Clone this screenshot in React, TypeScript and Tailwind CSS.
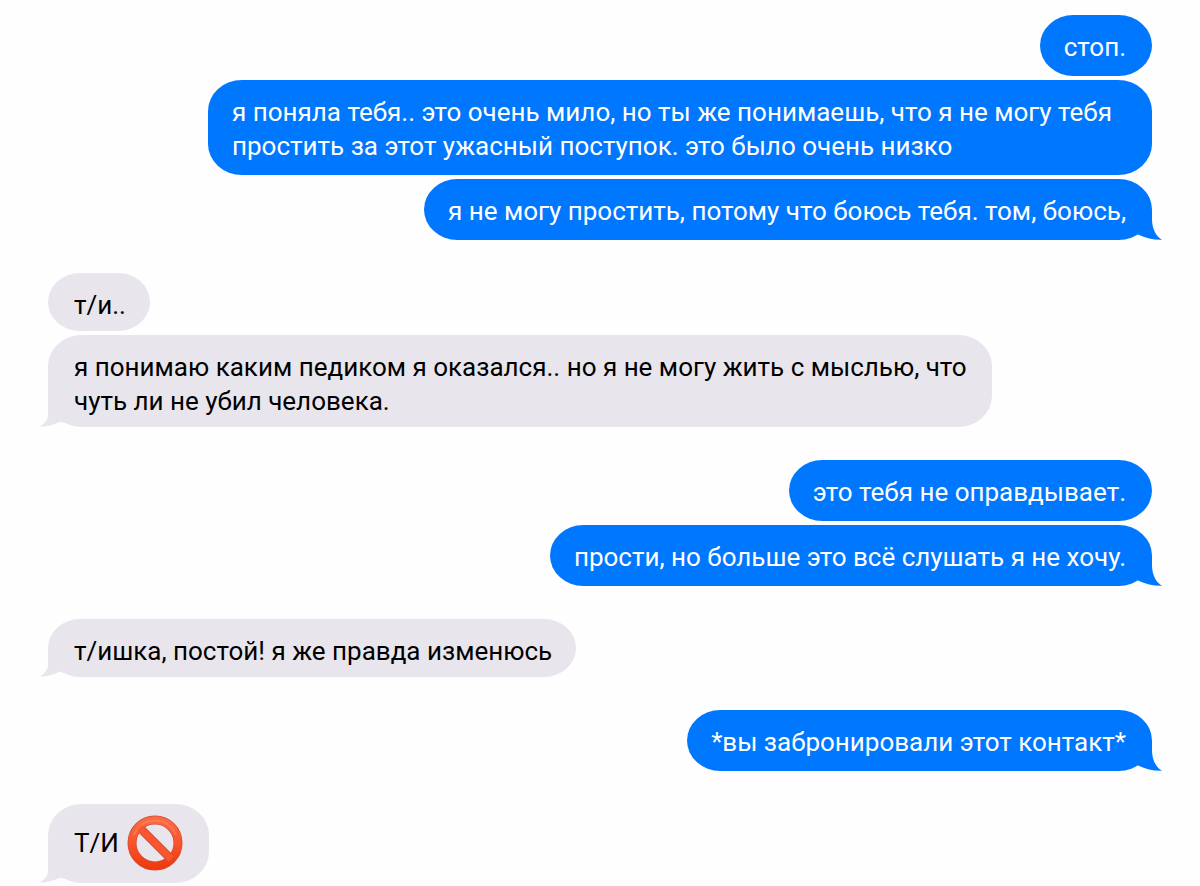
import clsx from "clsx";

type Message = {
  text: string;
  blocked?: boolean;
};

type Group = {
  from: "me" | "them";
  messages: Message[];
};

const groups: Group[] = [
  {
    from: "me",
    messages: [
      { text: "стоп." },
      {
        text: "я поняла тебя.. это очень мило, но ты же понимаешь, что я не могу тебя простить за этот ужасный поступок. это было очень низко",
      },
      { text: "я не могу простить, потому что боюсь тебя. том, боюсь," },
    ],
  },
  {
    from: "them",
    messages: [
      { text: "т/и.." },
      {
        text: "я понимаю каким педиком я оказался.. но я не могу жить с мыслью, что чуть ли не убил человека.",
      },
    ],
  },
  {
    from: "me",
    messages: [
      { text: "это тебя не оправдывает." },
      { text: "прости, но больше это всё слушать я не хочу." },
    ],
  },
  { from: "them", messages: [{ text: "т/ишка, постой! я же правда изменюсь" }] },
  { from: "me", messages: [{ text: "*вы забронировали этот контакт*" }] },
  { from: "them", messages: [{ text: "Т/И", blocked: true }] },
];

function Tail({ mine }: { mine: boolean }) {
  return (
    <svg
      viewBox="0 0 24 30"
      aria-hidden="true"
      className={clsx(
        "absolute bottom-0 h-[30px] w-6",
        mine ? "-right-[10px] fill-[#0077ff]" : "-left-2 -scale-x-100 fill-[#e8e5ec]"
      )}
    >
      {mine ? (
        <path d="M0 0H14V10C14.3 19 18 26.500 24 29.800C15 30 8 28 0 24.500Z" />
      ) : (
        <path d="M0 0H16V18C16 22 18.500 25.500 24 29.700C16 29.500 10 27.500 3.500 24.500L0 26Z" />
      )}
    </svg>
  );
}

function NoEntry() {
  return (
    <svg viewBox="0 0 56 56" role="img" aria-label="🚫" className="size-14 shrink-0">
      <defs>
        <linearGradient id="ring" x1="0" y1="0" x2="0" y2="1">
          <stop offset="0" stopColor="#fb6a45" />
          <stop offset="0.5" stopColor="#f9532b" />
          <stop offset="1" stopColor="#ee3c10" />
        </linearGradient>
      </defs>
      <g fill="none">
        <circle cx="28" cy="28" r="23" stroke="#cf4a2c" strokeWidth="9" />
        <path d="M13 13L43 43" stroke="#c2482c" strokeWidth="8.600" />
        <circle cx="28" cy="28" r="23" stroke="url(#ring)" strokeWidth="7.600" />
        <path d="M12 12L44 44" stroke="#f9552e" strokeWidth="7" />
        <path d="M7 20A22.500 22.500 0 0 1 49 20" stroke="#ff8a68" strokeWidth="2" opacity="0.5" />
      </g>
    </svg>
  );
}

export default function App() {
  return (
    <main className="flex min-h-screen flex-col gap-[33px] bg-[#fefefe] px-12 pt-[15px] pb-[3px] font-['Roboto','Liberation_Sans',sans-serif] text-[26px] leading-[34px]">
      {groups.map((group, i) => {
        const mine = group.from === "me";
        return (
          <ul key={i} className={clsx("flex flex-col gap-1", mine ? "items-end" : "items-start")}>
            {group.messages.map((message, j) => (
              <li
                key={j}
                className={clsx(
                  "relative max-w-[944px] rounded-[34px/31px]",
                  mine
                    ? "bg-[#0077ff] pt-[15px] pr-[26px] pb-3 pl-6 text-white"
                    : "bg-[#e8e5ec] pl-[26px] text-black",
                  !mine && (message.blocked ? "pt-[11px] pr-[26px] pb-3" : "pt-[15px] pr-6 pb-[9px]")
                )}
              >
                {message.blocked ? (
                  <span className="flex items-center gap-2">
                    {message.text}
                    <NoEntry />
                  </span>
                ) : (
                  message.text
                )}
                {j === group.messages.length - 1 && <Tail mine={mine} />}
              </li>
            ))}
          </ul>
        );
      })}
    </main>
  );
}
